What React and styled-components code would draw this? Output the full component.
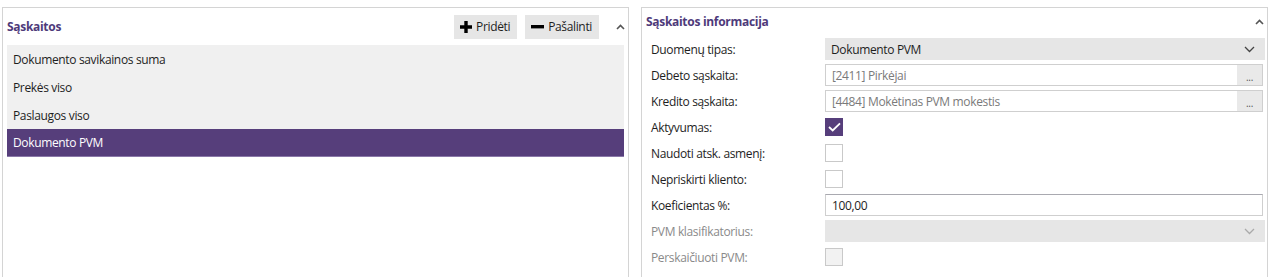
import React from "react";
import styled, { createGlobalStyle, css } from "styled-components";

const Global = createGlobalStyle`
  html, body { margin: 0; padding: 0; background: #fff; }
  body { font-family: "Open Sans", "Noto Sans", sans-serif; font-size: 12px; color: #1e1e1e; }
  * { box-sizing: border-box; }
`;

const Page = styled.div`
  display: flex;
  gap: 12px;
  padding: 7px 10px 0 2px;
  height: 277px;
  overflow: hidden;
`;

const Panel = styled.section`
  flex: ${(p) => p.$flex};
  border: 1px solid #d4d4d4;
  border-bottom: none;
  display: flex;
  flex-direction: column;
  min-width: 0;
`;

const Header = styled.div`
  display: flex;
  align-items: center;
  height: ${(p) => p.$h}px;
  padding: ${(p) => p.$pad || "0 3px 0 4px"};
  gap: 8px;
`;

const Title = styled.div`
  flex: 1;
  font-weight: 700;
  font-size: 12px;
  color: #4e3a7a;
  letter-spacing: -0.3px;
`;

const ToolButton = styled.button`
  display: flex;
  align-items: center;
  gap: 4px;
  height: 24px;
  padding: 0 7px 0 6px;
  border: none;
  background: #e6e6e6;
  font: inherit;
  font-size: 12px;
  color: #1e1e1e;
  letter-spacing: -0.35px;
`;

const Collapse = styled.span`
  width: 14px;
  display: flex;
  justify-content: center;
  margin-left: 6px;
`;

const List = styled.div`
  margin: 0 4px 0 4px;
  background: #f0f0f0;
`;

const Item = styled.div`
  height: 28px;
  display: flex;
  align-items: center;
  padding-left: 6px;
  letter-spacing: -0.35px;
  ${(p) =>
    p.$selected &&
    css`
      background: #563e7b;
      color: #fff;
      border-bottom: 1px solid #8a78a8;
    `}
`;

const Form = styled.div`
  display: grid;
  grid-template-columns: 174px 1fr;
  grid-auto-rows: 22px;
  row-gap: 4px;
  padding: 1px 2px 0 9px;
  align-items: center;
`;

const Label = styled.div`
  color: ${(p) => (p.$disabled ? "#8a8a8a" : "#1e1e1e")};
  letter-spacing: -0.35px;
`;

const Select = styled.div`
  height: 22px;
  background: #e6e6e6;
  display: flex;
  align-items: center;
  padding: 0 10px 0 6px;
  color: #1e1e1e;
  letter-spacing: -0.35px;
`;

const SelectText = styled.span`
  flex: 1;
`;

const Input = styled.div`
  height: 22px;
  border: 1px solid #cfcfcf;
  border-top-color: ${(p) => (p.$focus ? "#a9a9b0" : "#cfcfcf")};
  display: flex;
  align-items: center;
  padding-left: 6px;
  margin-right: 2px;
  color: ${(p) => (p.$muted ? "#7a7a7a" : "#1e1e1e")};
  letter-spacing: -0.35px;
`;

const InputText = styled.span`
  flex: 1;
`;

const Ellipsis = styled.span`
  width: 25px;
  align-self: stretch;
  background: #e9e9e9;
  display: flex;
  align-items: flex-end;
  justify-content: center;
  padding-bottom: 4px;
  font-size: 10px;
  line-height: 8px;
  color: #555;
`;

const Check = styled.span`
  width: 18px;
  height: 18px;
  border: 1px solid ${(p) => (p.$checked ? "#563e7b" : "#c9c9c9")};
  background: ${(p) => (p.$checked ? "#563e7b" : p.$disabled ? "#f2f2f2" : "#fff")};
  display: flex;
  align-items: center;
  justify-content: center;
`;

const ChevronUp = () => (
  <svg width="9" height="6" viewBox="0 0 9 6">
    <path d="M1 5 L4.5 1.5 L8 5" stroke="#555" strokeWidth="1.6" fill="none" />
  </svg>
);

const ChevronDown = ({ color = "#444" }) => (
  <svg width="11" height="7" viewBox="0 0 11 7">
    <path d="M1 1 L5.5 5.5 L10 1" stroke={color} strokeWidth="1.3" fill="none" />
  </svg>
);

const Plus = () => (
  <svg width="12" height="12" viewBox="0 0 12 12">
    <path d="M4.3 0 H7.7 V4.3 H12 V7.7 H7.7 V12 H4.3 V7.7 H0 V4.3 H4.3 Z" fill="#000" />
  </svg>
);

const Minus = () => (
  <svg width="13" height="4" viewBox="0 0 13 4">
    <rect x="0" y="0" width="13" height="3.4" fill="#000" />
  </svg>
);

const Tick = () => (
  <svg width="13" height="10" viewBox="0 0 13 10">
    <path d="M1 5 L4.7 8.5 L12 1.3" stroke="#fff" strokeWidth="1.8" fill="none" />
  </svg>
);

const items = ["Dokumento savikainos suma", "Prekės viso", "Paslaugos viso", "Dokumento PVM"];

export default function App() {
  return (
    <>
      <Global />
      <Page>
        <Panel $flex="0 0 627px">
          <Header $h={37} $pad="0 1px 0 4px">
            <Title>Sąskaitos</Title>
            <ToolButton>
              <Plus />
              Pridėti
            </ToolButton>
            <ToolButton>
              <Minus />
              Pašalinti
            </ToolButton>
            <Collapse>
              <ChevronUp />
            </Collapse>
          </Header>
          <List>
            {items.map((t, i) => (
              <Item key={t} $selected={i === 3}>
                {t}
              </Item>
            ))}
          </List>
        </Panel>
        <Panel $flex="1">
          <Header $h={29} $pad="0 1px 2px 4px">
            <Title>Sąskaitos informacija</Title>
            <Collapse>
              <ChevronUp />
            </Collapse>
          </Header>
          <Form>
            <Label>Duomenų tipas:</Label>
            <Select>
              <SelectText>Dokumento PVM</SelectText>
              <ChevronDown />
            </Select>
            <Label>Debeto sąskaita:</Label>
            <Input $muted>
              <InputText>[2411] Pirkėjai</InputText>
              <Ellipsis>...</Ellipsis>
            </Input>
            <Label>Kredito sąskaita:</Label>
            <Input $muted>
              <InputText>[4484] Mokėtinas PVM mokestis</InputText>
              <Ellipsis>...</Ellipsis>
            </Input>
            <Label>Aktyvumas:</Label>
            <Check $checked>
              <Tick />
            </Check>
            <Label>Naudoti atsk. asmenį:</Label>
            <Check />
            <Label>Nepriskirti kliento:</Label>
            <Check />
            <Label>Koeficientas %:</Label>
            <Input $focus>
              <InputText>100,00</InputText>
            </Input>
            <Label $disabled>PVM klasifikatorius:</Label>
            <Select>
              <SelectText />
              <ChevronDown color="#aaa" />
            </Select>
            <Label $disabled>Perskaičiuoti PVM:</Label>
            <Check $disabled />
          </Form>
        </Panel>
      </Page>
    </>
  );
}
